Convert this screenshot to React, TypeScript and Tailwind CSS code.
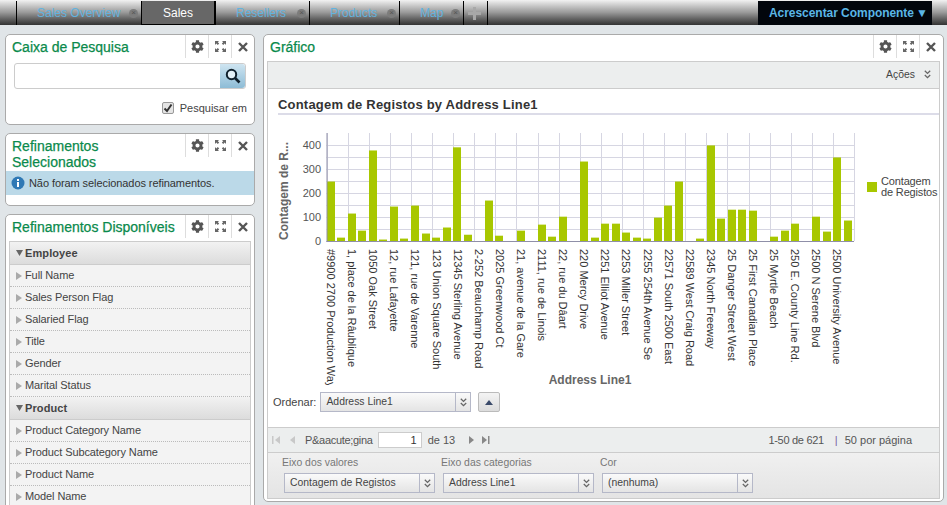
import React from "react";
import { FaCog } from "react-icons/fa";

const Gear = () => <FaCog size={13} color="#555" />;

const Expand = () => (
  <svg width="11" height="11" viewBox="0 0 11 11" fill="#666">
    <path d="M0 0h4L2.8 1.2 4.2 2.6 2.8 4 1.3 2.6 0 4zM11 0H7l1.2 1.2-1.4 1.4L8.2 4l1.5-1.4L11 4zM0 11h4L2.8 9.8l1.4-1.4L2.8 7 1.3 8.4 0 7zM11 11H7l1.2-1.2-1.4-1.4L8.2 7l1.5 1.4L11 7z" />
  </svg>
);

const Close = () => (
  <svg width="10" height="10" viewBox="0 0 10 10" stroke="#555" strokeWidth="2.4" fill="none">
    <path d="M1 1l8 8M9 1l-8 8" />
  </svg>
);

const PanelActions = () => (
  <div className="flex h-[23px] shrink-0">
    <div className="flex w-[23px] items-center justify-center border-l border-[#dddddd]"><Gear /></div>
    <div className="flex w-[23px] items-center justify-center border-l border-[#dddddd]"><Expand /></div>
    <div className="flex w-[23px] items-center justify-center border-l border-[#dddddd]"><Close /></div>
  </div>
);

const Chevrons = () => (
  <svg width="7" height="9" viewBox="0 0 7 9" fill="none" stroke="#666" strokeWidth="1.3">
    <path d="M0.8 0.8L3.5 3.4L6.2 0.8M0.8 5L3.5 7.6L6.2 5" />
  </svg>
);

const Select = ({ label, w = "w-[151px]" }: { label: string; w?: string }) => (
  <div className={`flex h-[20px] ${w} border border-[#b5b8c8] bg-gradient-to-b from-[#fafafa] to-[#e4e4e4] text-[10.4px] text-[#444]`}>
    <div className="flex flex-1 items-center pl-[5px]">{label}</div>
    <div className="flex w-[15px] items-center justify-center border-l border-[#b5b8c8]"><Chevrons /></div>
  </div>
);

const Tab = ({ label, w, pl }: { label: string; w: string; pl: string }) => (
  <div className={`flex h-full ${w} ${pl} shrink-0 items-center border-l border-black`}>
    <span className="text-[12px] text-[#62b2de]">{label}</span>
    <span className="ml-auto mr-[3px] flex h-[9px] w-[9px] items-center justify-center rounded-full bg-[#7c7c7c] text-[8px] leading-none text-[#555]">×</span>
  </div>
);

const bars = [247, 14, 114, 43, 376, 6, 143, 10, 147, 31, 14, 56, 389, 26, 0, 168, 22, 0, 43, 0, 68, 18, 101, 0, 330, 14, 72, 72, 35, 14, 10, 97, 147, 247, 0, 10, 397, 93, 130, 130, 126, 0, 18, 43, 72, 0, 101, 39, 347, 85];

const labels = [
  "#9900 2700 Production Way", "1, place de la Râublique", "1050 Oak Street", "12, rue Lafayette", "121, rue de Varenne",
  "123 Union Square South", "12345 Sterling Avenue", "2-252 Beauchamp Road", "2025 Greenwood Ct", "21, avenue de la Gare",
  "2111, rue de Linois", "22, rue du Dâart", "220 Mercy Drive", "2251 Elliot Avenue", "2253 Miller Street",
  "2255 254th Avenue Se", "22571 South 2500 East", "22589 West Craig Road", "2345 North Freeway", "25 Danger Street West",
  "25 First Canadian Place", "25 Myrtle Beach", "250 E. County Line Rd.", "2500 N Serene Blvd", "2500 University Avenue",
];

const Chart = () => {
  const ox = 268;
  const oy = 115;
  const left = 326.5 - ox;
  const right = 854 - ox;
  const base = 241 - oy;
  const top = 133 - oy;
  const unit = 0.2408;
  const hLines = Array.from({ length: 9 }, (_, i) => base - i * 12.04);
  const vLines = Array.from({ length: 26 }, (_, i) => left + i * 21.1);
  return (
    <svg width="671" height="275" className="block" style={{ fontFamily: "'Liberation Sans', sans-serif" }}>
      <defs>
        <clipPath id="lab"><rect x="0" y="0" width="671" height={385 - oy} /></clipPath>
      </defs>
      {hLines.map((y, i) => (
        <line key={i} x1={left} x2={right} y1={Math.round(y) + 0.5} y2={Math.round(y) + 0.5} stroke="#d6d6e2" />
      ))}
      {vLines.map((x, i) => (
        <line key={i} x1={Math.round(x) + 0.5} x2={Math.round(x) + 0.5} y1={top} y2={base} stroke="#d6d6e2" />
      ))}
      {bars.map((v, i) =>
        v > 0 ? (
          <rect key={i} x={Math.round(left + i * 10.56)} y={base - v * unit} width="8" height={v * unit} fill="#a8c700" />
        ) : null
      )}
      <line x1={left + 0.5} x2={left + 0.5} y1={top} y2={base + 1} stroke="#8f8fa8" />
      <line x1={left} x2={right} y1={base + 0.5} y2={base + 0.5} stroke="#8f8fa8" />
      {[0, 100, 200, 300, 400].map((v) => (
        <text key={v} x={321 - ox} y={base - v * unit + 4} textAnchor="end" fontSize="11" fill="#555">{v}</text>
      ))}
      <text transform={`translate(${288 - ox},${240 - oy}) rotate(-90)`} fontSize="12" fontWeight="700" fill="#666">Contagem de R...</text>
      <g clipPath="url(#lab)">
        {labels.map((t, i) => (
          <text key={t} transform={`translate(${327 + i * 21.1 - ox},${249 - oy}) rotate(90)`} fontSize="11" fill="#333">{t}</text>
        ))}
      </g>
      <text x={590 - ox} y={384 - oy} textAnchor="middle" fontSize="12" fontWeight="700" fill="#666">Address Line1</text>
      <rect x={867 - ox} y={182 - oy} width="10" height="10" fill="#a8c700" />
      <text x={881 - ox} y={185 - oy} fontSize="11" letterSpacing="-0.15" fill="#444">Contagem</text>
      <text x={881 - ox} y={196 - oy} fontSize="11" letterSpacing="-0.15" fill="#444">de Registos</text>
    </svg>
  );
};

const Item = ({ label }: { label: string }) => (
  <div className="flex h-[22px] items-center border-b border-dotted border-[#bbbbbb] pl-[6px] text-[11px] tracking-[-0.1px] text-[#444]">
    <svg width="6" height="8" viewBox="0 0 6 8" className="mr-[3px] shrink-0" fill="#aaa"><path d="M0 0l6 4-6 4z" /></svg>
    <span>{label}</span>
  </div>
);

const Group = ({ label }: { label: string }) => (
  <div className="flex h-[23px] items-center border-b border-[#cccccc] bg-gradient-to-b from-[#f2f2f2] to-[#dcdcdc] pl-[6px] text-[11px] font-bold tracking-[0.1px] text-[#444]">
    <svg width="7" height="6" viewBox="0 0 7 6" className="mr-[2px] shrink-0" fill="#666"><path d="M0 0h7L3.5 6z" /></svg>
    <span>{label}</span>
  </div>
);

const Title = ({ children }: { children: React.ReactNode }) => (
  <div className="pl-[6px] pt-[4px] text-[14px] leading-[16px] text-[#0a8a4c] [-webkit-text-stroke:0.25px_#0a8a4c]">{children}</div>
);

const Pg = ({ d, c }: { d: string; c: string }) => (
  <svg width="9" height="8" viewBox="0 0 9 8" fill={c}><path d={d} /></svg>
);

export default function App() {
  return (
    <div className="h-[505px] w-[947px] overflow-hidden bg-[#e0e5e8] [font-family:'Liberation_Sans',Arial,sans-serif]">
      <header className="flex h-[25px] bg-gradient-to-b from-[#f2f2f2] via-[#999999] to-[#333333] pt-[1px]">
        <div className="w-[16px] shrink-0" />
        <Tab label="Sales Overview" w="w-[125px]" pl="pl-[20px]" />
        <div className="flex h-full w-[74px] shrink-0 items-center justify-center border-x border-b border-black bg-[#676767] text-[12px] text-white">Sales</div>
        <Tab label="Resellers" w="w-[94px]" pl="pl-[20px]" />
        <Tab label="Products" w="w-[90px]" pl="pl-[20px]" />
        <Tab label="Map" w="w-[64px]" pl="pl-[20px]" />
        <div className="flex h-full w-[25px] shrink-0 items-center justify-center border-x border-black">
          <svg width="13" height="13" viewBox="0 0 13 13" className="-ml-[2px]" fill="#a8a8a8"><path d="M5 0h3v5h5v3H8v5H5V8H0V5h5z" /></svg>
        </div>
        <div className="ml-[270px] flex w-[174px] items-center bg-[#02060c] pl-[11px] text-[12px] font-bold text-[#5ab6e6]">
          <span className="tracking-[-0.05px]">Acrescentar Componente</span>
          <span className="ml-[2px]">▼</span>
        </div>
      </header>

      <main className="flex gap-[8px] pl-[5px] pt-[9px]">
        <div className="flex w-[250px] shrink-0 flex-col gap-[8px]">
          <section className="h-[91px] rounded-[5px] border border-[#aaaaaa] bg-white">
            <div className="flex justify-between">
              <Title>Caixa de Pesquisa</Title>
              <PanelActions />
            </div>
            <div className="mx-[8px] mt-[5px] flex h-[26px] rounded-[3px] border border-[#cccccc] bg-white">
              <div className="flex-1" />
              <div className="flex w-[25px] items-center justify-center rounded-r-[3px] bg-gradient-to-b from-[#cfe5f1] to-[#8dbcd6]">
                <svg width="16" height="16" viewBox="0 0 16 16" fill="none" stroke="#10202c" strokeWidth="2">
                  <circle cx="6.5" cy="6.5" r="4.7" fill="#e3f0f7" />
                  <path d="M10 10l4.5 4.5" strokeWidth="2.6" />
                </svg>
              </div>
            </div>
            <div className="mr-[7px] mt-[11px] flex items-center justify-end text-[11px] text-[#444]">
              <div className="mr-[6px] flex h-[12px] w-[12px] items-center justify-center rounded-[2px] border border-[#999999] bg-[#e4e4e4]">
                <svg width="10" height="10" viewBox="0 0 10 10" fill="none" stroke="#333" strokeWidth="2"><path d="M1.5 5.5L4 8l4.5-6.5" /></svg>
              </div>
              <span>Pesquisar em</span>
            </div>
          </section>

          <section className="h-[73px] rounded-[5px] border border-[#aaaaaa] bg-white">
            <div className="flex h-[37px] justify-between">
              <Title>Refinamentos<br />Selecionados</Title>
              <PanelActions />
            </div>
            <div className="flex h-[24px] items-center bg-[#bbd9e8] pl-[5px] text-[11px] tracking-[-0.08px] text-[#333]">
              <svg width="14" height="14" viewBox="0 0 14 14" className="mr-[4px]">
                <circle cx="7" cy="7" r="6.5" fill="#2f79b5" />
                <rect x="6" y="6" width="2" height="5" fill="#fff" />
                <rect x="6" y="3" width="2" height="2" fill="#fff" />
              </svg>
              <span>Não foram selecionados refinamentos.</span>
            </div>
          </section>

          <section className="h-[300px] rounded-t-[5px] border border-[#aaaaaa] bg-white px-[3px]">
            <div className="-mx-[3px] flex h-[26px] justify-between">
              <Title>Refinamentos Disponíveis</Title>
              <PanelActions />
            </div>
            <div className="border border-[#cccccc] bg-[#f3f3f3]">
              <Group label="Employee" />
              <Item label="Full Name" />
              <Item label="Sales Person Flag" />
              <Item label="Salaried Flag" />
              <Item label="Title" />
              <Item label="Gender" />
              <Item label="Marital Status" />
              <Group label="Product" />
              <Item label="Product Category Name" />
              <Item label="Product Subcategory Name" />
              <Item label="Product Name" />
              <Item label="Model Name" />
            </div>
          </section>
        </div>

        <section className="h-[468px] w-[681px] shrink-0 rounded-[5px] border border-[#aaaaaa] bg-white px-[3px]">
          <div className="-mx-[3px] flex h-[26px] justify-between">
            <Title>Gráfico</Title>
            <div className="mr-[1px]"><PanelActions /></div>
          </div>
          <div className="flex h-[438px] flex-col border border-[#cccccc]">
            <div className="flex h-[27px] shrink-0 items-center justify-end border-b border-[#cccccc] bg-[#eceeee] pb-[1px] pr-[8px] text-[10.4px] text-[#444]">
              <span>Ações</span>
              <span className="ml-[9px]"><Chevrons /></span>
            </div>
            <div className="h-[26px] shrink-0 pl-[10px] pt-[8px] text-[13px] font-bold leading-[15px] tracking-[0.2px] text-[#333]">
              <div className="h-[18px] border-b-2 border-[#dcdce8]">Contagem de Registos by Address Line1</div>
            </div>
            <Chart />
            <div className="flex items-center pl-[5px] pt-[2px] text-[11px] text-[#444]">
              <span className="mr-[4px]">Ordenar:</span>
              <Select label="Address Line1" />
              <div className="ml-[7px] flex h-[20px] w-[22px] items-center justify-center rounded-[2px] border border-[#bbbbbb] bg-gradient-to-b from-[#f4f4f4] to-[#dcdcdc]">
                <svg width="8" height="5" viewBox="0 0 8 5" fill="#3a4a6a"><path d="M4 0l4 5H0z" /></svg>
              </div>
            </div>
            <div className="flex-1" />
            <div className="flex h-[26px] shrink-0 items-center border-y border-[#cccccc] bg-[#eceeee] text-[11px] text-[#555]">
              <div className="ml-[4px] flex items-center gap-[7px]">
                <Pg d="M0 0h1.5v8H0zM8 0v8L3 4z" c="#c8c8c8" />
                <Pg d="M7 0v8L2 4z" c="#c8c8c8" />
              </div>
              <span className="ml-[8px] tracking-[-0.3px]">P&amp;aacute;gina</span>
              <div className="ml-[5px] flex h-[16px] w-[44px] items-center justify-end border border-[#cccccc] bg-white pr-[4px] text-[#333]">1</div>
              <span className="ml-[6px]">de 13</span>
              <div className="ml-[12px] flex items-center gap-[5px]">
                <Pg d="M2 0v8l5-4z" c="#888" />
                <Pg d="M1 0v8l5-4zM7 0h1.5v8H7z" c="#888" />
              </div>
              <span className="ml-auto tracking-[-0.3px]">1-50 de 621</span>
              <span className="ml-[11px] text-[#7a5fa0]">|</span>
              <span className="ml-[7px] mr-[27px]">50 por página</span>
            </div>
            <div className="flex h-[45px] shrink-0 gap-[8px] bg-gradient-to-b from-[#f0f0f0] to-[#e4e4e4] pl-[16px] pt-[3px]">
              {[["Eixo dos valores", "Contagem de Registos"], ["Eixo das categorias", "Address Line1"], ["Cor", "(nenhuma)"]].map(([a, b]) => (
                <div key={a}>
                  <div className="-ml-[2px] mb-[4px] text-[10.4px] leading-[13px] text-[#777]">{a}</div>
                  <Select label={b} />
                </div>
              ))}
            </div>
          </div>
        </section>
      </main>
    </div>
  );
}
